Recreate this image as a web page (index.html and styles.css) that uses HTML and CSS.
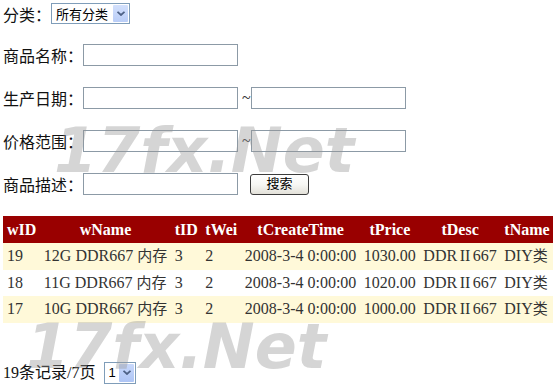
FILE: index.html
```html
<!DOCTYPE html>
<html lang="zh-CN">
<head>
<meta charset="utf-8">
<title>商品搜索</title>
<link rel="stylesheet" href="styles.css">
</head>
<body>
<div class="page">
  <form class="search">
    <div class="row row-first">
      <label class="lbl">分类：</label>
      <span class="sel sel-cat">
        <select class="sel-box"><option>所有分类</option></select>
        <span class="arrow"><svg width="8" height="5" viewBox="0 0 8 5"><path d="M0.5 0.8 L4 4 L7.5 0.8" fill="none" stroke="#4d6185" stroke-width="1.8"/></svg></span>
      </span>
    </div>
    <div class="row">
      <label class="lbl">商品名称：</label>
      <input class="txt" type="text">
    </div>
    <div class="row">
      <label class="lbl">生产日期：</label>
      <input class="txt" type="text"><span class="tilde">~</span><input class="txt" type="text">
    </div>
    <div class="row">
      <label class="lbl">价格范围：</label>
      <input class="txt" type="text"><span class="tilde">~</span><input class="txt" type="text">
    </div>
    <div class="row">
      <label class="lbl">商品描述：</label>
      <input class="txt" type="text">
      <button class="btn" type="button">搜索</button>
    </div>
  </form>

  <table class="grid">
    <thead>
      <tr><th class="left">wID</th><th>wName</th><th>tID</th><th>tWei</th><th>tCreateTime</th><th>tPrice</th><th>tDesc</th><th>tName</th></tr>
    </thead>
    <tbody>
      <tr class="alt"><td>19</td><td>12G DDR667 <span class="cjk">内存</span></td><td>3</td><td>2</td><td>2008-3-4 0:00:00</td><td>1030.00</td><td class="desc">DDR II 667</td><td>DIY<span class="cjk">类</span></td></tr>
      <tr><td>18</td><td>11G DDR667 <span class="cjk">内存</span></td><td>3</td><td>2</td><td>2008-3-4 0:00:00</td><td>1020.00</td><td class="desc">DDR II 667</td><td>DIY<span class="cjk">类</span></td></tr>
      <tr class="alt"><td>17</td><td>10G DDR667 <span class="cjk">内存</span></td><td>3</td><td>2</td><td>2008-3-4 0:00:00</td><td>1000.00</td><td class="desc">DDR II 667</td><td>DIY<span class="cjk">类</span></td></tr>
    </tbody>
  </table>

  <div class="pager">
    <span class="pager-text">19条记录/7页</span>
    <span class="sel sel-page">
      <select class="sel-box"><option>1</option></select>
      <span class="arrow arrow-hot"><svg width="8" height="5" viewBox="0 0 8 5"><path d="M0.5 0.8 L4 4 L7.5 0.8" fill="none" stroke="#4d6185" stroke-width="1.8"/></svg></span>
    </span>
  </div>

  <div class="wm wm1">17fx.Net</div>
  <div class="wm wm2">17fx.Net</div>
</div>
</body>
</html>
```

FILE: styles.css
```css
html, body {
  margin: 0;
  padding: 0;
  background: #ffffff;
}

body {
  font-family: "Liberation Serif", "Noto Sans CJK SC", serif;
  font-size: 16px;
  color: #000;
}

.page {
  position: relative;
  padding: 3px 3px 0 3px;
  height: 382px;
  overflow: hidden;
}

.search {
  margin: 0;
}

.row {
  display: flex;
  align-items: center;
  height: 22px;
  margin-bottom: 21px;
}

.row-first {
  height: 21px;
  margin-bottom: 20px;
}

.lbl {
  font-family: "Noto Sans CJK SC", sans-serif;
  font-size: 16px;
  line-height: 22px;
  color: #111;
}

.txt {
  box-sizing: border-box;
  width: 155px;
  height: 22px;
  margin: 0;
  padding: 1px 3px;
  border: 1px solid #8c9aa6;
  background: #fff;
  font-size: 13px;
  outline: none;
}

.tilde {
  width: 13px;
  padding-left: 4px;
  box-sizing: border-box;
  font-family: "Liberation Serif", serif;
  font-size: 16px;
  color: #333;
  line-height: 22px;
}

.btn {
  box-sizing: border-box;
  width: 59px;
  height: 21px;
  margin: 0 0 0 12px;
  padding: 0 0 3px 0;
  border: 1px solid #3c3c3c;
  border-radius: 3px;
  background: linear-gradient(#ffffff 0%, #f7f7f4 50%, #e3e1d9 100%);
  font-family: "Noto Sans CJK SC", sans-serif;
  font-size: 13px;
  line-height: 16px;
  color: #000;
}

.sel {
  position: relative;
  display: inline-block;
  vertical-align: middle;
}

.sel-box {
  -webkit-appearance: none;
  appearance: none;
  box-sizing: border-box;
  height: 21px;
  margin: 0;
  border: 1px solid #7f9db9;
  border-radius: 0;
  background: #fff;
  font-family: "Noto Sans CJK SC", sans-serif;
  font-size: 13px;
  color: #000;
  outline: none;
}

.sel-cat .sel-box {
  width: 79px;
  padding: 0 0 0 4px;
}

.sel-page .sel-box {
  width: 32px;
  height: 22px;
  padding: 0 0 0 3px;
  font-family: "Liberation Sans", sans-serif;
}

.arrow {
  position: absolute;
  right: 2px;
  top: 2px;
  bottom: 2px;
  width: 15px;
  display: flex;
  align-items: center;
  justify-content: center;
  background: linear-gradient(#d3e0fc, #b9cdf7);
  border-radius: 1px;
  pointer-events: none;
}

.arrow-hot {
  background: linear-gradient(#c8d8fb, #aec5f5);
}

.grid {
  border-collapse: collapse;
  border-spacing: 0;
  margin: 0;
  font-family: "Liberation Serif", "Noto Sans CJK SC", serif;
  font-size: 16px;
  color: #333;
}

.grid th {
  background: #990000;
  color: #fff;
  font-weight: bold;
  padding: 4px 3.5px 4px 4px;
  line-height: 19px;
  text-align: center;
  white-space: nowrap;
}

.grid th.left {
  text-align: left;
}

.grid td {
  padding: 4px 3.5px 4px 4px;
  line-height: 18.5px;
  white-space: nowrap;
  text-align: left;
}

.grid td.desc {
  word-spacing: -1.5px;
}

.grid .cjk {
  font-size: 15px;
}

.grid tr.alt td {
  background: #fff9d9;
}

.pager {
  display: flex;
  align-items: center;
  margin-top: 39px;
  height: 22px;
}

.pager-text {
  font-family: "Liberation Serif", "Noto Sans CJK SC", serif;
  font-size: 16px;
  line-height: 22px;
  color: #111;
  margin-right: 9px;
}

.wm {
  position: absolute;
  font-family: "DejaVu Sans", sans-serif;
  font-weight: bold;
  font-style: italic;
  font-size: 62px;
  line-height: 1;
  color: rgba(150, 150, 150, 0.4);
  white-space: nowrap;
  pointer-events: none;
}

.wm1 {
  left: 54px;
  top: 120px;
}

.wm2 {
  left: 26px;
  top: 316px;
}
```
